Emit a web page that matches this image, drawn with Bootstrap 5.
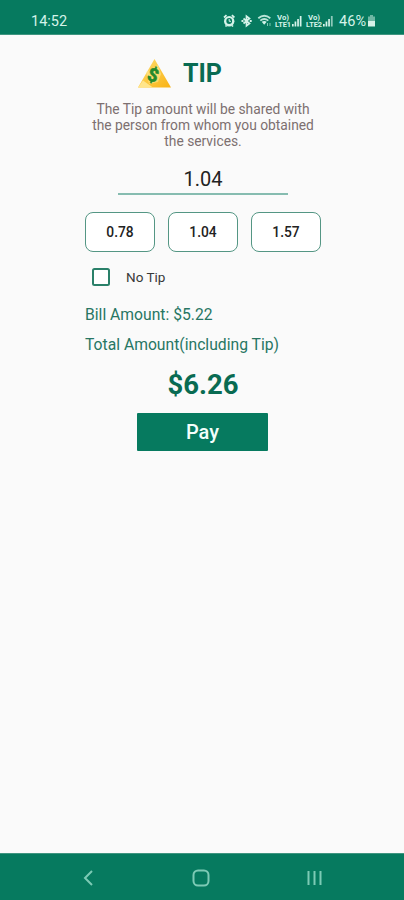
<!DOCTYPE html>
<html lang="en">
<head>
<meta charset="utf-8">
<meta name="viewport" content="width=device-width, initial-scale=1">
<title>Tip</title>
<link href="https://cdn.jsdelivr.net/npm/bootstrap@5.3.0/dist/css/bootstrap.min.css" rel="stylesheet">
<style>
:root{--brand:#067a5f;--ink:#096b52}
body{font-family:Roboto,"Liberation Sans",sans-serif;background:#fafafa;height:900px;overflow:hidden}
svg{display:block;flex:none}
.status{height:35px;background:var(--brand);color:#d5f3e9;padding:7px 28px 0 31px;border-bottom:1px solid #3f9580}
.status .clock{font-size:14.5px;line-height:30px}
.status .level{font-size:14.5px;line-height:29px;margin:0 1px 0 3px}
.screen{width:236px;margin-left:85px}
.heading{height:62px;padding:24px 0 0 52px;gap:12px}
.heading h1{font-size:25px;line-height:30px;font-weight:700;color:var(--ink)}
.note{font-size:13.8px;line-height:16px;color:#7d7070;margin:4px 0 0;height:48px;white-space:nowrap}
.amount{width:170px;height:28px;margin:18px auto 0;margin-left:33px;padding:0 0 2px;border:0;border-bottom:2px solid #86bcb0;border-radius:0;background:none;font-size:20px;line-height:24px;color:#222}
.choices{margin-top:17px}
.choice{width:70px;height:40px;padding:1px 0 0;border:1.5px solid #549684;border-radius:8px;background:#fff;font-size:13.8px;font-weight:500;color:#222}
.none-row{height:20px;margin-top:15px;padding-left:7px;gap:16px;font-size:13.5px;color:#383838}
.none-row .form-check-input{width:18px;height:18px;margin:0;border:2px solid #2a8069;border-radius:2.5px;background-color:#fff}
.line{font-size:15.7px;line-height:20px;color:#277663;white-space:nowrap}
.bill{margin:18px 0 10px}
.total{font-size:27.5px;line-height:34px;font-weight:700;color:var(--ink);margin-top:13px}
.pay{display:block;width:131px;height:38px;margin:11px 0 0 52px;padding:1px 0 0;border:0;border-radius:1px;background:var(--brand);color:#f3fffb;font-size:20px;font-weight:500;line-height:37px}
.keys{height:47px;background:var(--brand);border-top:1px solid #3f9580;padding:2px 81px 0 81px}
</style>
</head>
<body class="d-flex flex-column">
<header class="status d-flex justify-content-between">
  <span class="clock">14:52</span>
  <div class="d-flex">
    <svg width="113" height="28" viewBox="222 7 113 28" fill="#d5f3e9">
      <circle cx="228.2" cy="21.3" r="5.2"/><path d="M223 17.500l2.500-2.300M233.400 17.500l-2.500-2.300M224.500 26.500l1-1M232 26.500l-1-1" stroke="#d5f3e9" stroke-width="1.700"/>
      <circle cx="228.200" cy="21" r="2.900" fill="#067a5f"/><path d="M228.200 19v2.300h1.800" fill="none" stroke="#d5f3e9"/>
      <path d="M242.500 18.500l6 5-3 2.300v-9.600l3 2.300-6 5" fill="none" stroke="#d5f3e9" stroke-width="1.700"/><path d="M240.500 20h2v2h-2zM248.700 20h2v2h-2z"/>
      <g fill="none" stroke="#b9e5d8" stroke-width="1.800"><path d="M257.300 18.200q6-5 12 0M259.300 20.600q4-3.300 8 0"/></g><path d="M260.700 21.800q2.600-1.800 5 0l-2.500 3z"/>
      <path d="M266.500 26v-3M269 23v3" stroke="#7dc7b2" stroke-width="1"/>
      <g font-family="Roboto,sans-serif" font-size="6.800" font-weight="700" text-anchor="middle"><text x="282" y="20" textLength="12" lengthAdjust="spacingAndGlyphs">Vo)</text><text x="282" y="27" textLength="16" lengthAdjust="spacingAndGlyphs">LTE1</text><text x="313" y="20" textLength="12" lengthAdjust="spacingAndGlyphs">Vo)</text><text x="313" y="27" textLength="16" lengthAdjust="spacingAndGlyphs">LTE2</text></g>
      <path d="M291 24h1.700v2.500H291zM293.600 21.500h1.700v5h-1.700zM296.200 19h1.700v7.500h-1.700zM298.800 16h1.700v10.500h-1.700zM322 24h1.700v2.500H322zM324.600 21.500h1.700v5h-1.700zM327.200 19h1.700v7.500h-1.700z"/><path d="M329.900 16h1.800v10.500h-1.800z" opacity=".65"/>
    </svg>
    <span class="level">46%</span>
    <svg width="9" height="28" viewBox="0 0 9 28" fill="#d5f3e9"><path d="M3 8h3v1.500h2V14H1V9.500h2z" opacity=".5"/><path d="M1 14h7v5.500H1z"/></svg>
  </div>
</header>
<main class="flex-grow-1">
  <div class="screen">
    <div class="heading d-flex">
      <svg width="34" height="30" viewBox="0 0 34 30">
        <defs><linearGradient id="gold" x1="0" x2="1" y1="0" y2="1"><stop stop-color="#ffe071"/><stop offset="1" stop-color="#f9b215"/></linearGradient></defs>
        <path d="M17.500 0L34 28.500H1z" fill="url(#gold)"/><path d="M1 28.500l5-7 10 7z" fill="#ffe58b"/>
        <path d="M9 13l12-7 3 9-3 8-9 2z" fill="#fff0a0" opacity=".5"/>
        <text x="16" y="22.500" text-anchor="middle" font-family="Roboto,sans-serif" font-size="18.500" font-weight="900" fill="#258a2b" stroke="#258a2b" stroke-width=".4" transform="rotate(18 16 16)">$</text>
      </svg>
      <h1 class="mb-0">TIP</h1>
    </div>
    <p class="note text-center">The Tip amount will be shared with<br>the person from whom you obtained<br>the services.</p>
    <input class="amount d-block text-center" value="1.04" aria-label="Tip amount">
    <div class="choices d-flex justify-content-between">
      <button class="choice btn">0.78</button><button class="choice btn">1.04</button><button class="choice btn">1.57</button>
    </div>
    <label class="none-row d-flex align-items-center"><input class="form-check-input" type="checkbox"><span>No Tip</span></label>
    <div class="line bill">Bill Amount: $5.22</div>
    <div class="line">Total Amount(including Tip)</div>
    <div class="total text-center">$6.26</div>
    <button class="pay btn">Pay</button>
  </div>
</main>
<footer class="keys d-flex justify-content-between align-items-center">
  <svg width="14" height="18" viewBox="0 0 14 18" fill="none" stroke="#7ccab5" stroke-width="2"><path d="M11 2L4 9l7 7"/></svg>
  <svg width="18" height="18" viewBox="0 0 18 18" fill="none" stroke="#7ccab5" stroke-width="2"><rect x="1.500" y="1.500" width="15" height="15" rx="4.500"/></svg>
  <svg width="17" height="18" viewBox="0 0 17 18" stroke="#7ccab5" stroke-width="2"><path d="M2.500 2v14M8.500 2v14M14.500 2v14"/></svg>
</footer>
<script src="https://cdn.jsdelivr.net/npm/bootstrap@5.3.0/dist/js/bootstrap.bundle.min.js"></script>
</body>
</html>
